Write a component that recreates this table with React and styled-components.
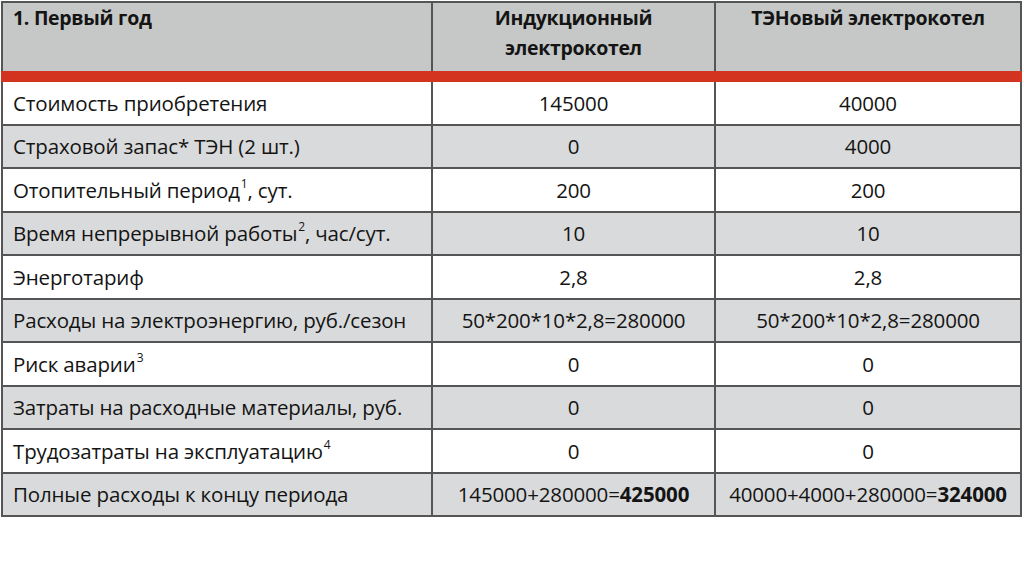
import React from "react";
import styled, { createGlobalStyle } from "styled-components";

const GlobalStyle = createGlobalStyle`
	body {
		margin: 0;
		background: #ffffff;
	}
`;

const Page = styled.div`
	width: 1024px;
	height: 571px;
	padding: 1px 0 0 1px;
	box-sizing: border-box;
	background: #fff;
`;

const Table = styled.table`
	width: 1021px;
	border-collapse: collapse;
	table-layout: fixed;
	font-family: "Open Sans", "Noto Sans", sans-serif;
	color: #141414;
`;

const HeadCell = styled.th`
	height: 68px;
	padding: 0 10px;
	background: #c6c8c7;
	border: 2px solid #555;
	border-bottom: 11px solid #d2341f;
	vertical-align: top;
	text-align: ${(p) => (p.$left ? "left" : "center")};
	font-size: 19.5px;
	font-weight: 700;
	line-height: 30px;
	letter-spacing: -0.3px;
`;

const Row = styled.tr`
	background: ${(p) => (p.$shade ? "#d9dadb" : "#ffffff")};
`;

const Cell = styled.td`
	height: 41.5px;
	padding: 0 10px;
	border: 2px solid #555;
	text-align: ${(p) => (p.$left ? "left" : "center")};
	vertical-align: middle;
	font-size: 20.5px;
	letter-spacing: -0.15px;
	white-space: nowrap;
`;

const Sup = styled.sup`
	font-size: 12px;
	vertical-align: 10px;
	line-height: 0;
	margin-left: 1px;
`;

const rows = [
	["Стоимость приобретения", null, "145000", "40000"],
	["Страховой запас* ТЭН (2 шт.)", null, "0", "4000"],
	["Отопительный период", "1", "200", "200", ", сут."],
	["Время непрерывной работы", "2", "10", "10", ", час/сут."],
	["Энерготариф", null, "2,8", "2,8"],
	["Расходы на электроэнергию, руб./сезон", null, "50*200*10*2,8=280000", "50*200*10*2,8=280000"],
	["Риск аварии", "3", "0", "0"],
	["Затраты на расходные материалы, руб.", null, "0", "0"],
	["Трудозатраты на эксплуатацию", "4", "0", "0"],
];

export default function App() {
	return (
		<Page>
			<GlobalStyle />
			<Table>
				<colgroup>
					<col style={{ width: "430px" }} />
					<col style={{ width: "283px" }} />
					<col />
				</colgroup>
				<thead>
					<tr>
						<HeadCell $left>1. Первый год</HeadCell>
						<HeadCell>
							Индукционный
							<br />
							электрокотел
						</HeadCell>
						<HeadCell>ТЭНовый электрокотел</HeadCell>
					</tr>
				</thead>
				<tbody>
					{rows.map(([label, note, a, b, tail], i) => (
						<Row key={label} $shade={i % 2 === 1}>
							<Cell $left>
								{label}
								{note && <Sup>{note}</Sup>}
								{tail}
							</Cell>
							<Cell>{a}</Cell>
							<Cell>{b}</Cell>
						</Row>
					))}
					<Row $shade>
						<Cell $left>Полные расходы к концу периода</Cell>
						<Cell>
							145000+280000=<b>425000</b>
						</Cell>
						<Cell>
							40000+4000+280000=<b>324000</b>
						</Cell>
					</Row>
				</tbody>
			</Table>
		</Page>
	);
}
